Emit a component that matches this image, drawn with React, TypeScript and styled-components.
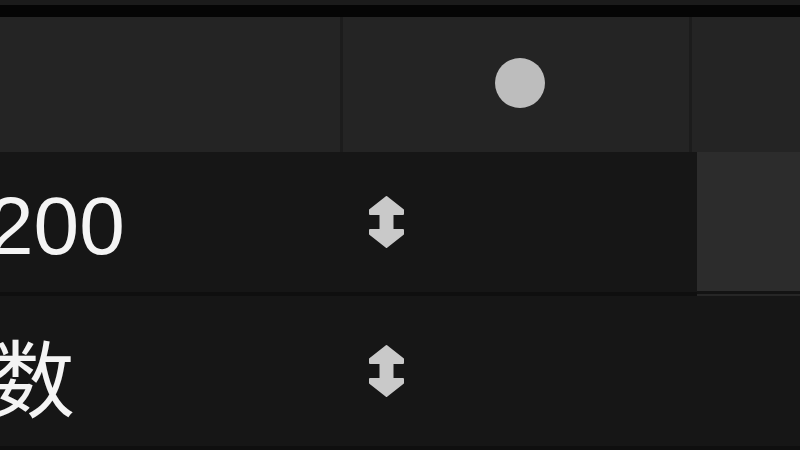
import React from "react";
import styled, { createGlobalStyle } from "styled-components";

const Global = createGlobalStyle`
  html, body { margin: 0; padding: 0; background: #161616; overflow: hidden; }
  #root { width: 800px; height: 450px; }
`;

const Page = styled.div`
  width: 800px;
  height: 450px;
  display: flex;
  flex-direction: column;
  background: #161616;
  overflow: hidden;
  font-family: "Liberation Sans", "Noto Sans CJK SC", sans-serif;
`;

const TopStrip = styled.div`
  height: 5px;
  background: #1b1b1b;
`;

const TopBand = styled.div`
  height: 12px;
  background: #050505;
`;

const Header = styled.div`
  height: 135px;
  display: grid;
  grid-template-columns: 343px 349px 1fr;
  background: #242424;
`;

const HeaderCell = styled.div<{ $divider?: boolean }>`
  display: flex;
  align-items: center;
  justify-content: center;
  border-right: ${(p) => (p.$divider ? "3px solid #1c1c1c" : "none")};
`;

const Dot = styled.div`
  width: 50px;
  height: 50px;
  border-radius: 50%;
  background: #bdbdbd;
  margin-top: -2px;
  margin-left: 8px;
`;

const Row = styled.div<{ $h: number }>`
  height: ${(p) => p.$h}px;
  display: grid;
  grid-template-columns: 695px 1fr;
  border-bottom: 4px solid #0f0f0f;
  background: #161616;
`;

const MainCell = styled.div`
  display: flex;
  align-items: center;
  overflow: hidden;
`;

const Label = styled.div<{ $cjk?: boolean; $shift: number }>`
  width: 368px;
  flex: none;
  margin-left: ${(p) => p.$shift}px;
  padding-right: ${(p) => -p.$shift}px;
  padding-top: 8px;
  box-sizing: content-box;
  color: #f4f4f4;
  font-family: ${(p) =>
    p.$cjk
      ? '"Noto Sans CJK SC", "Noto Sans CJK JP", sans-serif'
      : '"Liberation Sans", Arial, sans-serif'};
  font-size: ${(p) => (p.$cjk ? 84 : 82)}px;
  line-height: 1;
  white-space: nowrap;
`;

const Sorter = styled.svg`
  width: 37px;
  height: 54px;
  flex: none;
`;

const SideCell = styled.div`
  padding-left: 2px;
  display: flex;
`;

const SideBox = styled.div`
  flex: 1;
  background: #2c2c2c;
  margin-bottom: -2px;
  border-bottom: 3px solid #131313;
  box-shadow: 0 5px 0 #262626;
`;

const ArrowIcon = () => (
  <Sorter viewBox="0 0 37 54">
    <path
      d="M18.5 2 L35 15 L35 19 L24.5 19 L24.5 35 L35 35 L35 39 L18.5 52 L2 39 L2 35 L12.5 35 L12.5 19 L2 19 L2 15 Z"
      fill="#c9c9c9"
      stroke="#c9c9c9"
      strokeWidth="2"
      strokeLinejoin="round"
    />
  </Sorter>
);

export default function App() {
  return (
    <Page>
      <Global />
      <TopStrip />
      <TopBand />
      <Header>
        <HeaderCell $divider />
        <HeaderCell $divider>
          <Dot />
        </HeaderCell>
        <HeaderCell />
      </Header>
      <Row $h={141}>
        <MainCell>
          <Label $shift={-12}>200</Label>
          <ArrowIcon />
        </MainCell>
        <SideCell>
          <SideBox />
        </SideCell>
      </Row>
      <Row $h={150}>
        <MainCell>
          <Label $cjk $shift={-9}>数</Label>
          <ArrowIcon />
        </MainCell>
        <SideCell />
      </Row>
    </Page>
  );
}
